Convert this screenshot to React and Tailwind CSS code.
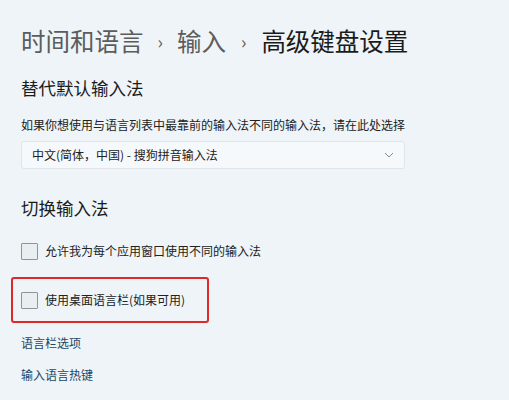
export default function App() {
  const font = { fontFamily: '"Noto Sans CJK SC", "Noto Sans", sans-serif' };
  return (
    <div className="w-[509px] h-[400px] bg-[#eef4f7] overflow-hidden text-[#1b1b1b]" style={font}>
      <div className="pl-[21px] pt-[24px] flex flex-col">
        <div className="flex items-center h-[34px] text-[24.5px] leading-[34px]">
          <span className="text-[#5c5c5c]">时间和语言</span>
          <span className="text-[#5c5c5c] text-[18px] mx-[14px]">›</span>
          <span className="text-[#5c5c5c]">输入</span>
          <span className="text-[#5c5c5c] text-[18px] mx-[15px]">›</span>
          <span className="text-[#1b1b1b]">高级键盘设置</span>
        </div>
        <div className="mt-[18px] text-[17.5px] leading-[24px]">替代默认输入法</div>
        <div className="mt-[16px] text-[12px] leading-[18px] text-[#222]">
          如果你想使用与语言列表中最靠前的输入法不同的输入法，请在此处选择
        </div>
        <div className="mt-[7px] w-[384px] h-[28px] bg-[#f6f9fb] border border-[#dfe5e9] rounded-[3px] flex items-center justify-between pl-[10px] pr-[10px]">
          <span className="text-[12px] text-[#222]">中文(简体，中国) - 搜狗拼音输入法</span>
          <svg width="10" height="6" viewBox="0 0 10 6" fill="none">
            <path d="M1 1 L5 5 L9 1" stroke="#8a8a8a" strokeWidth="1" />
          </svg>
        </div>
        <div className="mt-[27px] text-[17.5px] leading-[24px]">切换输入法</div>
        <div className="mt-[22px] flex items-center gap-[7px]">
          <div className="w-[17px] h-[17px] border border-[#8f9498] bg-[#e9eef1] rounded-[1px]" />
          <span className="text-[12px] text-[#222]">允许我为每个应用窗口使用不同的输入法</span>
        </div>
        <div className="mt-[17px] -ml-[10px] w-[198px] h-[46px] border-2 border-[#e02828] rounded-[3px] flex items-center pl-[8px] gap-[7px]">
          <div className="w-[17px] h-[17px] border border-[#8f9498] bg-[#e9eef1] rounded-[1px]" />
          <span className="text-[12px] text-[#222]">使用桌面语言栏(如果可用)</span>
        </div>
        <div className="mt-[11px] text-[12px] leading-[18px] text-[#1d4764]">语言栏选项</div>
        <div className="mt-[14px] text-[12px] leading-[18px] text-[#1d4764]">输入语言热键</div>
      </div>
    </div>
  );
}
